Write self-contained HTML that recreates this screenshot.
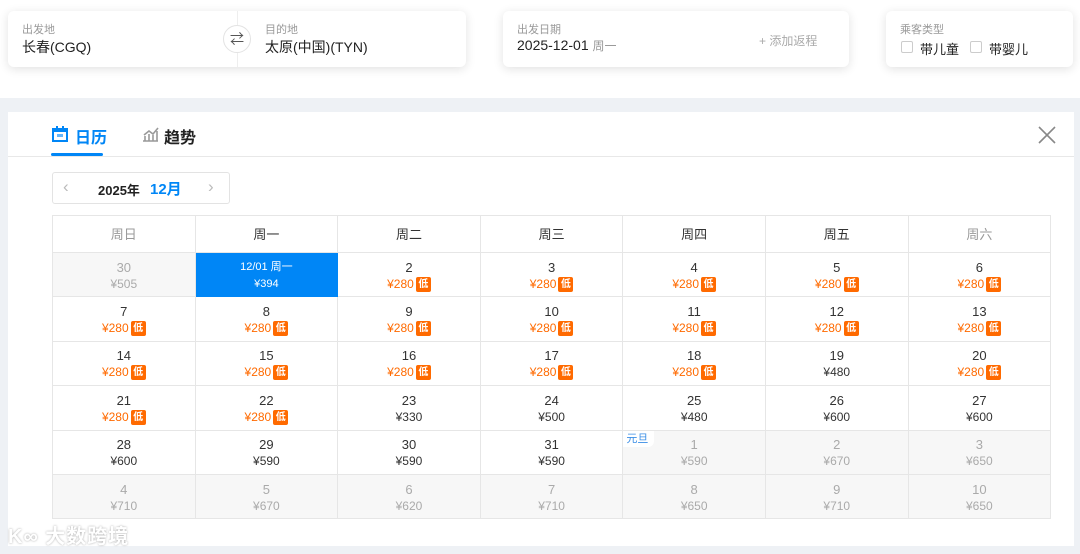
<!DOCTYPE html>
<html><head><meta charset="utf-8">
<style>
*{margin:0;padding:0;box-sizing:border-box}
body{width:1080px;height:554px;overflow:hidden;background:#fff;font-family:"Liberation Sans","Noto Sans CJK SC",sans-serif;position:relative;color:#333}
.card{position:absolute;background:#fff;border-radius:6px;box-shadow:0 2px 10px rgba(0,0,0,.12)}
.lbl{position:absolute;font-size:11px;color:#999}
.val{position:absolute;font-size:14px;color:#222}
.bg{position:absolute;left:0;top:98px;width:1080px;height:456px;background:#eef1f5}
.panel{position:absolute;left:8px;top:112px;width:1066px;height:434px;background:#fff}
table{position:absolute;left:52px;top:215px;border-collapse:collapse;table-layout:fixed}
td{border:1px solid #e6e6e6;width:142.6px;text-align:center;font-size:13px;line-height:17px;vertical-align:middle;position:relative}
tr.h td{height:37px;font-size:13px;color:#333}
tr.r td{height:44.4px;padding-top:2px}
td .n{font-size:13px;color:#333}
td .p{font-size:12px;color:#333;height:17px;display:flex;justify-content:center;align-items:center}
td .p.o{color:#ff6a00}
td .p.o i{font-style:normal;display:inline-block;background:#ff6a00;color:#fff;font-size:10px;line-height:15px;width:15px;height:15px;border-radius:2px;margin-left:2px;font-weight:bold;text-align:center}
td.g{background:#f7f7f7}
td.g .n,td.g .p{color:#aaa}
td.sel{background:#0086f6;border-color:#0086f6}
td.sel .n,td.sel .p{color:#fff;font-size:11px}
</style></head><body>
<div class="card" style="left:8px;top:11px;width:458px;height:56px">
 <div class="lbl" style="left:14px;top:10px">出发地</div>
 <div class="val" style="left:14px;top:26px">长春(CGQ)</div>
 <div style="position:absolute;left:229px;top:0;width:1px;height:56px;background:#eee"></div>
 <div style="position:absolute;left:215px;top:14px;width:28px;height:28px;border-radius:50%;border:1px solid #e3e3e3;background:#fff;text-align:center;line-height:26px;font-size:14px;color:#555">⇄</div>
 <div class="lbl" style="left:257px;top:10px">目的地</div>
 <div class="val" style="left:257px;top:26px">太原(中国)(TYN)</div>
</div>
<div class="card" style="left:503px;top:11px;width:346px;height:56px">
 <div class="lbl" style="left:14px;top:10px">出发日期</div>
 <div class="val" style="left:14px;top:26px">2025-12-01 <span style="font-size:12px;color:#999">周一</span></div>
 <div class="lbl" style="left:256px;top:21px;font-size:12px;color:#aaa">+ 添加返程</div>
</div>
<div class="card" style="left:886px;top:11px;width:187px;height:56px">
 <div class="lbl" style="left:14px;top:10px">乘客类型</div>
 <div style="position:absolute;left:15px;top:30px;width:12px;height:12px;border:1px solid #ccc;border-radius:2px"></div>
 <div class="val" style="left:34px;top:28px;font-size:13px">带儿童</div>
 <div style="position:absolute;left:84px;top:30px;width:12px;height:12px;border:1px solid #ccc;border-radius:2px"></div>
 <div class="val" style="left:103px;top:28px;font-size:13px">带婴儿</div>
</div>
<div class="bg"></div>
<div class="panel">
 <svg style="position:absolute;left:44px;top:14px" width="16" height="16" viewBox="0 0 16 16"><rect x="1" y="3" width="14" height="12" fill="none" stroke="#0086f6" stroke-width="2"/><rect x="1" y="3" width="14" height="3" fill="#0086f6"/><rect x="4" y="0" width="2" height="4" fill="#0086f6"/><rect x="10" y="0" width="2" height="4" fill="#0086f6"/><rect x="5" y="8" width="6" height="3" fill="#0086f6" opacity=".6"/></svg>
 <div style="position:absolute;left:67px;top:12px;font-size:16px;color:#0086f6;font-weight:bold">日历</div>
 <div style="position:absolute;left:43px;top:41px;width:52px;height:3px;background:#0086f6;border-radius:2px"></div>
 <svg style="position:absolute;left:134px;top:14px" width="17" height="16" viewBox="0 0 17 16"><path d="M1 15h15M3 15V10M7 15V8M11 15V9M15 15V5M2 9l5-4 4 3 5-6" stroke="#999" stroke-width="1.6" fill="none"/></svg>
 <div style="position:absolute;left:156px;top:12px;font-size:16px;color:#222;font-weight:bold">趋势</div>
 <div style="position:absolute;left:0;top:44px;width:1066px;height:1px;background:#e8e8e8"></div>
 <svg style="position:absolute;left:1030px;top:14px" width="18" height="18" viewBox="0 0 18 18"><path d="M1 1L17 17M17 1L1 17" stroke="#888" stroke-width="1.6"/></svg>
 <div style="position:absolute;left:44px;top:60px;width:178px;height:32px;border:1px solid #e3e3e3;border-radius:3px">
  <span style="position:absolute;left:10px;top:4px;font-size:17px;color:#bbb">‹</span>
  <span style="position:absolute;left:45px;top:7px;font-size:13px;font-weight:bold;color:#222">2025年</span>
  <span style="position:absolute;left:97px;top:5px;font-size:15px;font-weight:bold;color:#0086f6">12月</span>
  <span style="position:absolute;left:155px;top:4px;font-size:17px;color:#bbb">›</span>
 </div>
</div>
<table>
<tr class="h"><td style="color:#999">周日</td><td>周一</td><td>周二</td><td>周三</td><td>周四</td><td>周五</td><td style="color:#999">周六</td></tr>
<tr class="r"><td class="g"><div class="n">30</div><div class="p">¥505</div></td><td class="sel"><div class="n">12/01 周一</div><div class="p">¥394</div></td><td><div class="n">2</div><div class="p o">¥280<i>低</i></div></td><td><div class="n">3</div><div class="p o">¥280<i>低</i></div></td><td><div class="n">4</div><div class="p o">¥280<i>低</i></div></td><td><div class="n">5</div><div class="p o">¥280<i>低</i></div></td><td><div class="n">6</div><div class="p o">¥280<i>低</i></div></td></tr>
<tr class="r"><td><div class="n">7</div><div class="p o">¥280<i>低</i></div></td><td><div class="n">8</div><div class="p o">¥280<i>低</i></div></td><td><div class="n">9</div><div class="p o">¥280<i>低</i></div></td><td><div class="n">10</div><div class="p o">¥280<i>低</i></div></td><td><div class="n">11</div><div class="p o">¥280<i>低</i></div></td><td><div class="n">12</div><div class="p o">¥280<i>低</i></div></td><td><div class="n">13</div><div class="p o">¥280<i>低</i></div></td></tr>
<tr class="r"><td><div class="n">14</div><div class="p o">¥280<i>低</i></div></td><td><div class="n">15</div><div class="p o">¥280<i>低</i></div></td><td><div class="n">16</div><div class="p o">¥280<i>低</i></div></td><td><div class="n">17</div><div class="p o">¥280<i>低</i></div></td><td><div class="n">18</div><div class="p o">¥280<i>低</i></div></td><td><div class="n">19</div><div class="p">¥480</div></td><td><div class="n">20</div><div class="p o">¥280<i>低</i></div></td></tr>
<tr class="r"><td><div class="n">21</div><div class="p o">¥280<i>低</i></div></td><td><div class="n">22</div><div class="p o">¥280<i>低</i></div></td><td><div class="n">23</div><div class="p">¥330</div></td><td><div class="n">24</div><div class="p">¥500</div></td><td><div class="n">25</div><div class="p">¥480</div></td><td><div class="n">26</div><div class="p">¥600</div></td><td><div class="n">27</div><div class="p">¥600</div></td></tr>
<tr class="r"><td><div class="n">28</div><div class="p">¥600</div></td><td><div class="n">29</div><div class="p">¥590</div></td><td><div class="n">30</div><div class="p">¥590</div></td><td><div class="n">31</div><div class="p">¥590</div></td><td class="g"><span style="position:absolute;left:0;top:0;background:#fff;color:#3a8ee6;font-size:11px;line-height:14px;padding:1px 6px 1px 3px;border-radius:0 0 6px 0">元旦</span><div class="n">1</div><div class="p">¥590</div></td><td class="g"><div class="n">2</div><div class="p">¥670</div></td><td class="g"><div class="n">3</div><div class="p">¥650</div></td></tr>
<tr class="r"><td class="g"><div class="n">4</div><div class="p">¥710</div></td><td class="g"><div class="n">5</div><div class="p">¥670</div></td><td class="g"><div class="n">6</div><div class="p">¥620</div></td><td class="g"><div class="n">7</div><div class="p">¥710</div></td><td class="g"><div class="n">8</div><div class="p">¥650</div></td><td class="g"><div class="n">9</div><div class="p">¥710</div></td><td class="g"><div class="n">10</div><div class="p">¥650</div></td></tr>
</table>
<div style="position:absolute;left:8px;top:520px;font-size:20px;color:#fff;text-shadow:0 0 2px rgba(0,0,0,.35);font-weight:bold;letter-spacing:1px">K∞ 大数跨境</div>
</body></html>
